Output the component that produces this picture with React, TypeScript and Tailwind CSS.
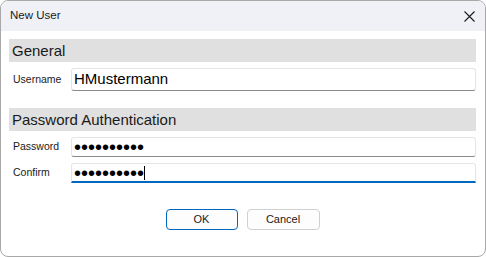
const sans = "font-['Liberation_Sans',Arial,sans-serif]"

function Section({ title }: { title: string }) {
  return (
    <div className="h-[23px] bg-[#e0e0e0] flex items-center pl-[3px] text-[15px] text-[#1a1a1a] leading-none">
      {title}
    </div>
  )
}

function Field({
  label,
  children,
  focused,
  tall,
}: {
  label: string
  children: React.ReactNode
  focused?: boolean
  tall?: boolean
}) {
  return (
    <div className="flex items-center">
      <span className="w-[62px] pl-[4px] text-[10.5px] text-[#1a1a1a]">{label}</span>
      <div
        className={`flex-1 flex items-center pl-[2px] rounded-[3px] border border-[#e5e5e5] bg-white ${
          tall ? 'h-[23px]' : 'h-[20px]'
        } ${focused ? 'border-b-2 border-b-[#0067c0] rounded-b-none' : 'border-b-[#8a8a8a]'}`}
      >
        {children}
      </div>
    </div>
  )
}

export default function App() {
  return (
    <div className={`w-[486px] h-[257px] bg-white border border-[#a8a8a8] rounded-[8px] overflow-hidden flex flex-col ${sans}`}>
      <div className="h-[30px] bg-[#eff1f7] flex items-center justify-between pl-[9px] pr-[10px]">
        <span className="text-[11.5px] text-[#1a1a1a]">New User</span>
        <svg width="11" height="11" viewBox="0 0 11 11" className="text-[#1a1a1a]">
          <path d="M0.5 0.5 L10.5 10.5 M10.5 0.5 L0.5 10.5" stroke="currentColor" strokeWidth="1.1" />
        </svg>
      </div>

      <div className="flex flex-col pl-[8px] pr-[9px] pt-[8px]">
        <Section title="General" />
        <div className="mt-[6px]">
          <Field label="Username" tall>
            <span className="text-[15px] text-black">HMustermann</span>
          </Field>
        </div>

        <div className="mt-[17px]">
          <Section title="Password Authentication" />
        </div>
        <div className="mt-[6px] flex flex-col gap-[6px]">
          <Field label="Password">
            <span className="text-[20px] leading-none text-black">••••••••••</span>
          </Field>
          <Field label="Confirm" focused>
            <span className="text-[20px] leading-none text-black">••••••••••</span>
            <span className="w-px h-[14px] bg-black" />
          </Field>
        </div>

        <div className="mt-[26px] flex justify-center gap-[9px] text-[11px] text-[#1a1a1a]">
          <button className="w-[72px] h-[21px] rounded-[4px] border border-[#0067c0] bg-[#fdfdfd]">OK</button>
          <button className="w-[73px] h-[21px] rounded-[4px] border border-[#d0d0d0] bg-[#fdfdfd]">Cancel</button>
        </div>
      </div>
    </div>
  )
}
